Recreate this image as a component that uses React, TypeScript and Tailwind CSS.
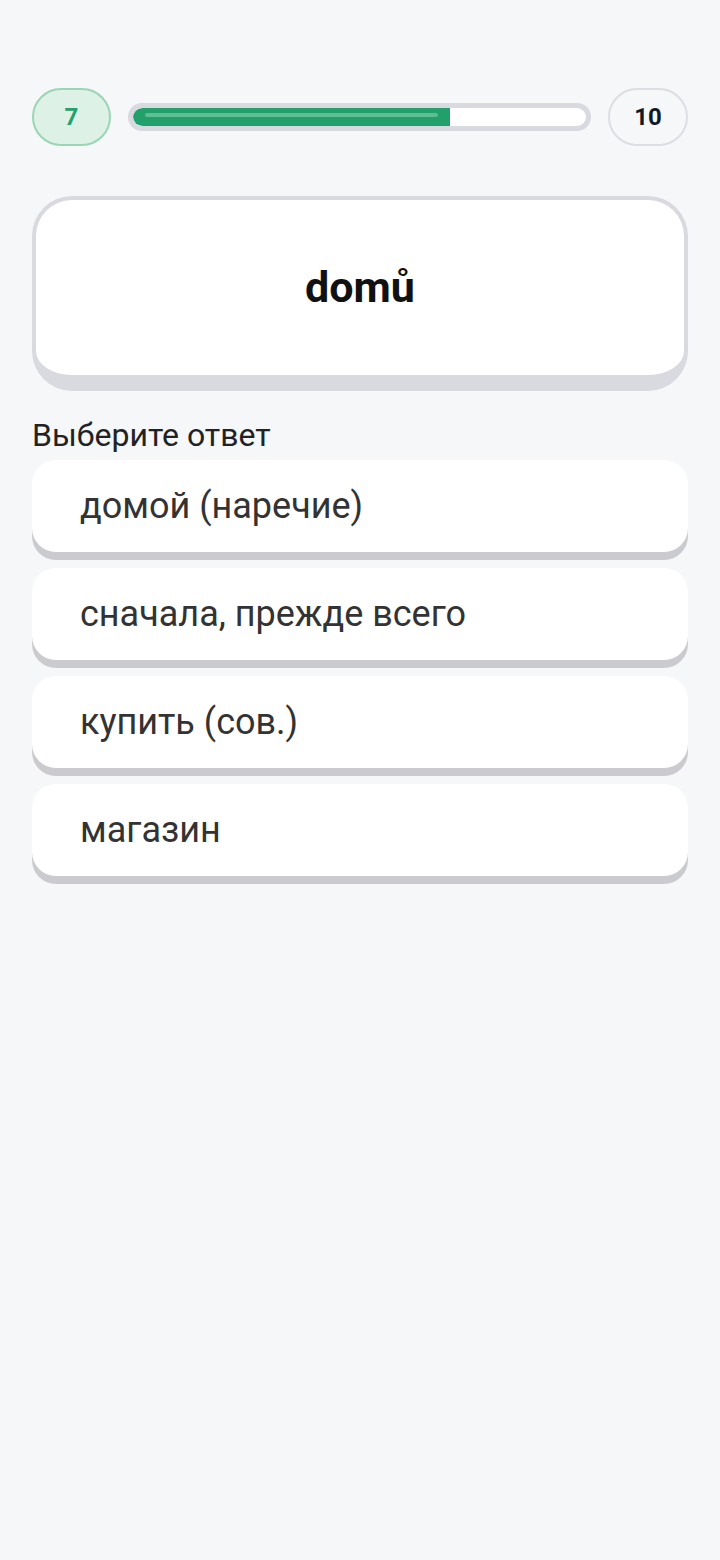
import React from "react";

const options = ["домой (наречие)", "сначала, прежде всего", "купить (сов.)", "магазин"];

export default function App() {
  return (
    <div className="min-h-[1560px] w-full bg-[#f6f7f9] px-[32px] pt-[88px]" style={{ fontFamily: "Roboto, 'Noto Sans', sans-serif" }}>
      <div className="flex items-center gap-[17px]">
        <div className="flex h-[58px] w-[79px] shrink-0 items-center justify-center rounded-[29px] border-2 border-[#9bd5b6] bg-[#ddf1e6] text-[24px] font-bold text-[#23a06c]">
          7
        </div>
        <div className="relative h-[28px] flex-1 overflow-hidden rounded-full border-[5px] border-[#d8dae0] bg-white">
          <div className="relative h-full w-[70%] rounded-l-full bg-[#22a06b]">
            <div className="absolute left-[12px] right-[12px] top-[5px] h-[4px] rounded-full bg-[#5fbd93]" />
          </div>
        </div>
        <div className="flex h-[58px] w-[80px] shrink-0 items-center justify-center rounded-[29px] border-2 border-[#dcdee3] bg-[#f6f7f9] text-[24px] font-bold text-[#111827]">
          10
        </div>
      </div>

      <div className="mt-[50px] flex h-[195px] items-center justify-center rounded-[40px] border-[4px] border-b-[16px] border-[#d8dae0] bg-white">
        <span className="text-[43px] font-bold text-[#111111]">domů</span>
      </div>

      <div className="mt-[25px] text-[32px] leading-[38px] text-[#222222]">Выберите ответ</div>

      <div className="mt-[6px] flex flex-col gap-[16px]">
        {options.map((o) => (
          <div key={o} className="flex h-[92px] items-center rounded-[24px] bg-white pl-[48px] text-[36px] text-[#333333] shadow-[0_8px_0_#cbcbcf]">
            {o}
          </div>
        ))}
      </div>
    </div>
  );
}
